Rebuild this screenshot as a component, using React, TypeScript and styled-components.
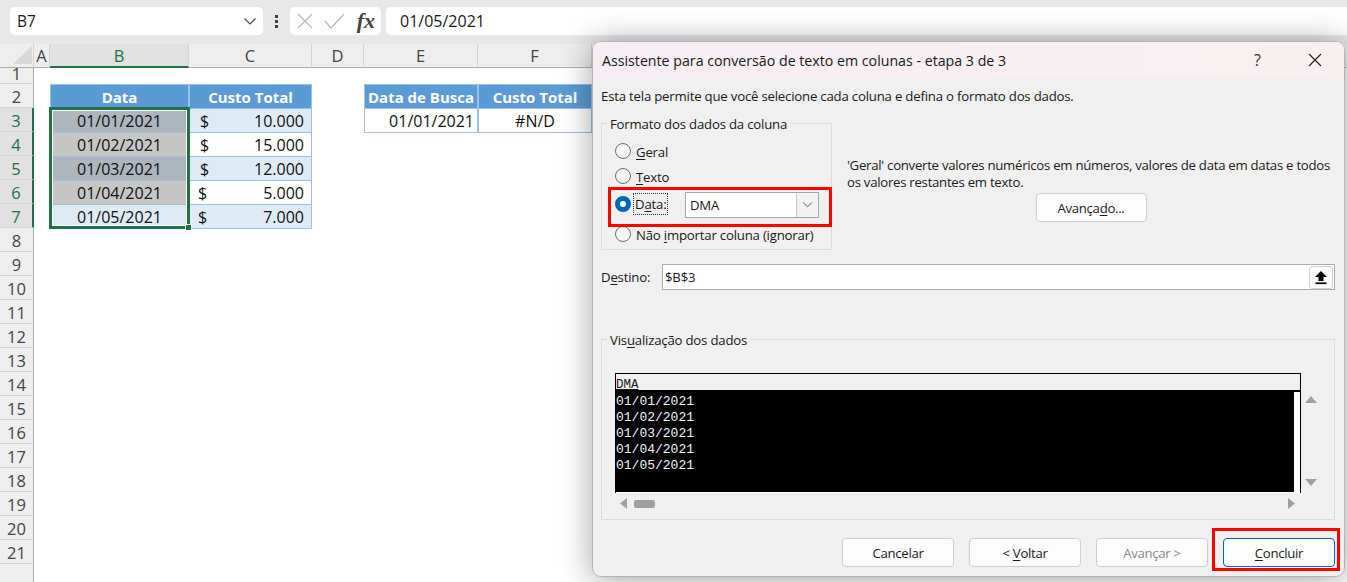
import React from "react";
import styled, { createGlobalStyle } from "styled-components";

const COLUMNS = ["A", "B", "C", "D", "E", "F", "", "", "", ""];
const ROW_COUNT = 22;
const LAST_LABEL = 21;
const FONT = `"Open Sans", "Noto Sans", sans-serif`;

const GlobalStyle = createGlobalStyle`
  html, body {
    margin: 0;
    padding: 0;
    width: 1347px;
    height: 582px;
    overflow: hidden;
    background: #ffffff;
    font-family: ${FONT};
    color: #1a1a1a;
  }
  u { text-underline-offset: 2px; text-decoration-thickness: 1px; }
`;

const Page = styled.div`
  position: relative;
  width: 1347px;
  height: 582px;
  overflow: hidden;
  display: flex;
  flex-direction: column;
`;

/* formula bar */
const FormulaBar = styled.div`
  height: 44px;
  flex: none;
  box-sizing: border-box;
  padding: 7px 0 9px 10px;
  display: flex;
  align-items: stretch;
  background: #e8e8e8;
`;

const NameBox = styled.div`
  width: 253px;
  box-sizing: border-box;
  padding: 0 6px 0 7px;
  display: flex;
  align-items: center;
  justify-content: space-between;
  background: #fff;
  border-radius: 5px;
  font-size: 15.5px;
`;

const Dots = styled.div`
  width: 27px;
  display: flex;
  flex-direction: column;
  align-items: center;
  justify-content: center;
  gap: 2px;
  span {
    width: 3px;
    height: 3px;
    background: #444;
  }
`;

const FormulaButtons = styled.div`
  width: 91px;
  box-sizing: border-box;
  padding: 0 6px 0 7px;
  display: flex;
  align-items: center;
  justify-content: space-between;
  background: #fff;
  border-radius: 5px;
`;

const Fx = styled.span`
  font-family: "Liberation Serif", serif;
  font-style: italic;
  font-weight: 700;
  font-size: 22px;
  line-height: 24px;
  color: #444;
`;

const FormulaInput = styled.div`
  flex: 1;
  margin-left: 5px;
  padding-left: 14px;
  display: flex;
  align-items: center;
  background: #fff;
  border-radius: 5px 0 0 5px;
  font-size: 16px;
`;

/* sheet */
const Sheet = styled.div`
  flex: 1;
  display: grid;
  grid-template-columns: 34px 16px 139px 123px 52px 114px 114px repeat(4, 190px);
  grid-template-rows: 24px 16px repeat(${ROW_COUNT - 1}, 24px);
  background: #fff;
  font-size: 16px;
`;

const Corner = styled.div`
  background: #eeeeee;
  border-bottom: 1px solid #b0b0b0;
  border-right: 1px solid #d4d4d4;
  box-sizing: border-box;
  display: flex;
  align-items: flex-end;
  justify-content: flex-end;
  padding: 0 1px 3px 0;
`;

const ColumnHeader = styled.div<{ $active?: boolean }>`
  box-sizing: border-box;
  display: flex;
  align-items: center;
  justify-content: center;
  font-size: 16.5px;
  color: ${(p) => (p.$active ? "#217346" : "#444")};
  background: ${(p) => (p.$active ? "#e1e1e1" : "#eeeeee")};
  border-right: 1px solid #d4d4d4;
  border-bottom: ${(p) => (p.$active ? "2px solid #217346" : "1px solid #b0b0b0")};
`;

const RowHeader = styled.div<{ $active?: boolean; $row: number }>`
  grid-column: 1;
  grid-row: ${(p) => p.$row + 1};
  box-sizing: border-box;
  padding: ${(p) => (p.$row === 1 ? "0 0 3px" : "2px 0 0")};
  display: flex;
  align-items: center;
  justify-content: center;
  overflow: hidden;
  font-size: 16.5px;
  line-height: ${(p) => (p.$row === 1 ? "12px" : "20px")};
  color: ${(p) => (p.$active ? "#217346" : "#444")};
  background: ${(p) => (p.$active ? "#e1e1e1" : "#eeeeee")};
  border-bottom: 1px solid #d4d4d4;
  border-right: ${(p) => (p.$active ? "2px solid #217346" : "1px solid #b0b0b0")};
`;

const Cell = styled.div<{
  $col: number;
  $row: number;
  $bg?: string;
  $head?: boolean;
  $align?: string;
  $pad?: number;
}>`
  grid-column: ${(p) => p.$col};
  grid-row: ${(p) => p.$row};
  box-sizing: border-box;
  display: flex;
  align-items: center;
  justify-content: ${(p) => p.$align ?? "center"};
  padding: 0 ${(p) => p.$pad ?? 3}px;
  background: ${(p) => p.$bg ?? "#fff"};
  border: 1px solid #9bc2e6;
  margin: 0 0 -1px 0;
  white-space: nowrap;
  color: ${(p) => (p.$head ? "#fff" : "#111")};
  font-weight: ${(p) => (p.$head ? 700 : 400)};
  font-size: ${(p) => (p.$head ? "15px" : "16px")};
`;

const Selection = styled.div`
  grid-column: 3;
  grid-row: 4 / 9;
  position: relative;
  margin: -1px;
  box-sizing: border-box;
  border: 3px solid #217346;
  box-shadow: inset 0 0 0 1px #fff;
`;

const FillHandle = styled.span`
  position: absolute;
  right: -5px;
  bottom: -5px;
  width: 5px;
  height: 5px;
  background: #217346;
  border: 1px solid #fff;
`;

/* dialog */
const Dialog = styled.div`
  position: absolute;
  left: 592px;
  top: 41px;
  width: 753px;
  height: 536px;
  box-sizing: border-box;
  display: flex;
  flex-direction: column;
  overflow: hidden;
  background: #f0f0f0;
  border: 1px solid #b4b4b4;
  border-radius: 9px;
  font-size: 13.2px;
  letter-spacing: -0.2px;
`;

const DialogShadow = styled.div`
  position: absolute;
  left: 592px;
  top: 41px;
  width: 753px;
  height: 536px;
  border-radius: 9px;
  box-shadow: 0 2px 32px rgba(0, 0, 0, 0.38);
`;

const TitleBar = styled.div`
  height: 36px;
  flex: none;
  padding: 0 22px 0 9px;
  display: flex;
  align-items: center;
  background: linear-gradient(90deg, #f6eef4, #f8f0f0);
  font-size: 14.2px;
  letter-spacing: 0;
`;

const TitleText = styled.span`
  flex: 1;
`;

const HelpMark = styled.span`
  width: 54px;
  font-size: 16px;
  color: #333;
`;

const Body = styled.div`
  flex: 1;
  padding: 0 9px 0 8px;
  display: flex;
  flex-direction: column;
`;

const Intro = styled.div`
  margin-top: 9px;
  height: 18px;
  line-height: 18px;
`;

const FormatRow = styled.div`
  margin-top: 18px;
  display: flex;
`;

const Group = styled.div<{ $width?: string; $height: number }>`
  position: relative;
  flex: none;
  box-sizing: border-box;
  width: ${(p) => p.$width ?? "100%"};
  height: ${(p) => p.$height}px;
  border: 1px solid #dcdcdc;
`;

const Legend = styled.span`
  position: absolute;
  left: 5px;
  top: -9px;
  padding: 0 3px;
  line-height: 18px;
  background: #f0f0f0;
`;

const RadioStack = styled.div`
  padding: 15px 0 0 13px;
`;

const RadioRow = styled.div<{ $height: number }>`
  height: ${(p) => p.$height}px;
  display: flex;
  align-items: center;
`;

const Radio = styled.span<{ $checked?: boolean }>`
  flex: none;
  width: 16px;
  height: 16px;
  box-sizing: border-box;
  margin-right: 5px;
  border-radius: 50%;
  background: ${(p) => (p.$checked ? "#fff" : "#f5f5f5")};
  border: ${(p) => (p.$checked ? "5px solid #0067c0" : "1px solid #6e6e6e")};
`;

const RadioText = styled.span`
  padding-top: 2px;
`;

const FocusLabel = styled.span`
  flex: none;
  box-sizing: border-box;
  margin-left: -2px;
  padding-left: 1px;
  width: 33px;
  height: 20px;
  line-height: 21px;
  outline: 1px dotted #333;
`;

const SelectBox = styled.div`
  margin: 1px 0 0 18px;
  width: 134px;
  height: 26px;
  box-sizing: border-box;
  padding-left: 4px;
  display: flex;
  align-items: center;
  justify-content: space-between;
  background: #fff;
  border: 1px solid #a8a8a8;
`;

const SelectArrow = styled.span`
  width: 21px;
  height: 24px;
  display: flex;
  align-items: center;
  justify-content: center;
  background: #f2f2f2;
  border-left: 1px solid #c8c8c8;
`;

const HintColumn = styled.div`
  flex: 1;
  min-width: 0;
  margin: 34px 0 0 15px;
  display: flex;
  flex-direction: column;
`;

const HintText = styled.div`
  line-height: 17px;
  white-space: nowrap;
  letter-spacing: -0.27px;
`;

const PushButton = styled.button<{ $primary?: boolean; $disabled?: boolean }>`
  flex: none;
  width: 112px;
  height: 29px;
  box-sizing: border-box;
  padding: 0;
  background: #fdfdfd;
  border: 1px solid ${(p) => (p.$primary ? "#0067c0" : "#d0d0d0")};
  border-radius: 4px;
  font: inherit;
  letter-spacing: -0.3px;
  color: ${(p) => (p.$disabled ? "#8a8a8a" : "#1a1a1a")};
`;

const AdvancedButton = styled(PushButton)`
  align-self: center;
  width: 111px;
  margin-top: 2px;
`;

const TargetRow = styled.div`
  margin-top: 14px;
  height: 26px;
  display: flex;
  align-items: center;
`;

const TargetLabel = styled.span`
  width: 61px;
`;

const TargetInput = styled.div`
  flex: 1;
  height: 26px;
  box-sizing: border-box;
  padding: 0 1px 0 2px;
  display: flex;
  align-items: center;
  justify-content: space-between;
  background: #fff;
  border: 1px solid #ababab;
`;

const CollapseButton = styled.span`
  width: 24px;
  height: 23px;
  box-sizing: border-box;
  display: flex;
  align-items: center;
  justify-content: center;
  background: #fbfbfb;
  border: 1px solid #d0d0d0;
  border-radius: 3px;
`;

const PreviewGroup = styled.div`
  margin-top: 49px;
`;

const PreviewInner = styled.div`
  padding: 33px 0 0 13px;
  display: flex;
`;

const PreviewTable = styled.div`
  width: 686px;
  height: 120px;
  box-sizing: border-box;
  border-top: 1px solid #000;
  border-left: 1px solid #000;
  border-right: 1px solid #000;
  display: flex;
  flex-direction: column;
  font-family: "Liberation Mono", monospace;
  font-size: 13px;
  letter-spacing: 0;
  background: #fff;
`;

const PreviewHead = styled.div`
  height: 16px;
  flex: none;
  line-height: 23px;
  font-size: 12.5px;
  background: #f0f0f0;
  border-bottom: 2px solid #000;
  text-decoration: underline;
  overflow: hidden;
`;

const PreviewRows = styled.div`
  flex: 1;
  margin: 0 6px 1px 0;
  padding-top: 2px;
  background: #000;
  color: #f0f4fa;
  line-height: 16px;
`;

const VScroll = styled.div`
  padding: 23px 0 0 4px;
  height: 90px;
  display: flex;
  flex-direction: column;
  justify-content: space-between;
`;

const HScroll = styled.div`
  margin: 5px 0 0 13px;
  width: 683px;
  padding: 0 3px 0 5px;
  box-sizing: border-box;
  display: flex;
  align-items: center;
`;

const Thumb = styled.span`
  width: 21px;
  height: 8px;
  margin-left: 7px;
  background: #a0a0a0;
  border-radius: 2px;
`;

const ScrollSpacer = styled.span`
  flex: 1;
`;

const Footer = styled.div`
  margin-top: 18px;
  display: flex;
  justify-content: flex-end;
  gap: 15px;
`;

const Highlight = styled.div<{ $left: number; $top: number; $width: number; $height: number }>`
  position: absolute;
  left: ${(p) => p.$left}px;
  top: ${(p) => p.$top}px;
  width: ${(p) => p.$width}px;
  height: ${(p) => p.$height}px;
  box-sizing: border-box;
  border: 3px solid #ff0000;
`;

const Chevron = ({ size = 14, color = "#444" }: { size?: number; color?: string }) => (
  <svg width={size} height={size} viewBox="0 0 14 14" fill="none">
    <path d="M1.5 4.5 7 10l5.5-5.5" stroke={color} strokeWidth="1.1" />
  </svg>
);

const CrossIcon = () => (
  <svg width="16" height="16" viewBox="0 0 16 16" fill="none">
    <path d="M1 1l14 14M15 1L1 15" stroke="#b8b8b8" strokeWidth="1.2" />
  </svg>
);

const CheckIcon = () => (
  <svg width="22" height="16" viewBox="0 0 22 16" fill="none">
    <path d="M1 8l6 7L20 1" stroke="#b8b8b8" strokeWidth="1.2" />
  </svg>
);

const CloseIcon = () => (
  <svg width="14" height="14" viewBox="0 0 14 14" fill="none">
    <path d="M1 1l12 12M13 1L1 13" stroke="#222" strokeWidth="1.1" />
  </svg>
);

const UploadIcon = () => (
  <svg width="14" height="15" viewBox="0 0 14 15" fill="#000">
    <path d="M7 1 13 7H9.5v4h-5V7H1z" />
    <rect x="1.5" y="12.4" width="11" height="1.7" />
  </svg>
);

const Triangle = ({ dir }: { dir: "up" | "down" | "left" | "right" }) => {
  const paths = {
    up: "M6 0 12 7H0z",
    down: "M0 0h12L6 7z",
    left: "M7 0v11L0 5.5z",
    right: "M0 0v11l7-5.5z",
  };
  const wide = dir === "up" || dir === "down";
  return (
    <svg width={wide ? 12 : 7} height={wide ? 7 : 11} viewBox={wide ? "0 0 12 7" : "0 0 7 11"} fill="#a0a0a0">
      <path d={paths[dir]} />
    </svg>
  );
};

const CornerMark = () => (
  <svg width="19" height="18" viewBox="0 0 19 18" fill="#d8d8d8">
    <path d="M19 0v18H0z" />
  </svg>
);

const dataRows = [
  { date: "01/01/2021", bg: "#adb5bf", costBg: "#ddebf7", cost: "10.000", pad: 10 },
  { date: "01/02/2021", bg: "#c6c6c6", costBg: "#ffffff", cost: "15.000", pad: 10 },
  { date: "01/03/2021", bg: "#adb5bf", costBg: "#ddebf7", cost: "12.000", pad: 10 },
  { date: "01/04/2021", bg: "#c6c6c6", costBg: "#ffffff", cost: "5.000", pad: 8 },
  { date: "01/05/2021", bg: "#ddebf7", costBg: "#ddebf7", cost: "7.000", pad: 8 },
];

const previewDates = ["01/01/2021", "01/02/2021", "01/03/2021", "01/04/2021", "01/05/2021"];

const Accounting = styled.span`
  flex: 1;
  display: flex;
  justify-content: space-between;
`;

const CostCell = styled(Cell)`
  padding-right: 7px;
`;

export default function App() {
  return (
    <Page>
      <GlobalStyle />
      <FormulaBar>
        <NameBox>
          B7
          <Chevron />
        </NameBox>
        <Dots>
          <span />
          <span />
          <span />
        </Dots>
        <FormulaButtons>
          <CrossIcon />
          <CheckIcon />
          <Fx>fx</Fx>
        </FormulaButtons>
        <FormulaInput>01/05/2021</FormulaInput>
      </FormulaBar>

      <Sheet>
        <Corner>
          <CornerMark />
        </Corner>
        {COLUMNS.map((c, i) => (
          <ColumnHeader key={i} $active={c === "B"}>
            {c}
          </ColumnHeader>
        ))}
        {Array.from({ length: ROW_COUNT }, (_, i) => (
          <RowHeader key={i} $row={i + 1} $active={i >= 2 && i <= 6}>
            {i < LAST_LABEL ? i + 1 : ""}
          </RowHeader>
        ))}

        <Cell $col={3} $row={3} $bg="#5b9bd5" $head>
          Data
        </Cell>
        <Cell $col={4} $row={3} $bg="#5b9bd5" $head>
          Custo Total
        </Cell>
        {dataRows.map((r, i) => (
          <React.Fragment key={r.date}>
            <Cell $col={3} $row={i + 4} $bg={r.bg}>
              {r.date}
            </Cell>
            <CostCell $col={4} $row={i + 4} $bg={r.costBg} $pad={r.pad}>
              <Accounting>
                <span>$</span>
                <span>{r.cost}</span>
              </Accounting>
            </CostCell>
          </React.Fragment>
        ))}
        <Selection>
          <FillHandle />
        </Selection>

        <Cell $col={6} $row={3} $bg="#5b9bd5" $head>
          Data de Busca
        </Cell>
        <Cell $col={7} $row={3} $bg="#5b9bd5" $head>
          Custo Total
        </Cell>
        <Cell $col={6} $row={4} $align="flex-end">
          01/01/2021
        </Cell>
        <Cell $col={7} $row={4}>
          #N/D
        </Cell>
      </Sheet>

      <DialogShadow />
      <Dialog>
        <TitleBar>
          <TitleText>Assistente para conversão de texto em colunas - etapa 3 de 3</TitleText>
          <HelpMark>?</HelpMark>
          <CloseIcon />
        </TitleBar>
        <Body>
          <Intro>Esta tela permite que você selecione cada coluna e defina o formato dos dados.</Intro>
          <FormatRow>
            <Group $width="231px" $height={127}>
              <Legend>Formato dos dados da coluna</Legend>
              <RadioStack>
                <RadioRow $height={24}>
                  <Radio />
                  <RadioText>
                    <u>G</u>eral
                  </RadioText>
                </RadioRow>
                <RadioRow $height={26}>
                  <Radio />
                  <RadioText>
                    <u>T</u>exto
                  </RadioText>
                </RadioRow>
                <RadioRow $height={30}>
                  <Radio $checked />
                  <FocusLabel>
                    D<u>a</u>ta:
                  </FocusLabel>
                  <SelectBox>
                    DMA
                    <SelectArrow>
                      <Chevron size={11} />
                    </SelectArrow>
                  </SelectBox>
                </RadioRow>
                <RadioRow $height={30}>
                  <Radio />
                  <RadioText>
                    Não <u>i</u>mportar coluna (ignorar)
                  </RadioText>
                </RadioRow>
              </RadioStack>
            </Group>
            <HintColumn>
              <HintText>
                'Geral' converte valores numéricos em números, valores de data em datas e todos
                <br />
                os valores restantes em texto.
              </HintText>
              <AdvancedButton>
                Avança<u>d</u>o...
              </AdvancedButton>
            </HintColumn>
          </FormatRow>

          <TargetRow>
            <TargetLabel>
              D<u>e</u>stino:
            </TargetLabel>
            <TargetInput>
              $B$3
              <CollapseButton>
                <UploadIcon />
              </CollapseButton>
            </TargetInput>
          </TargetRow>

          <PreviewGroup>
            <Group $height={181}>
              <Legend>
                Vis<u>u</u>alização dos dados
              </Legend>
              <PreviewInner>
                <PreviewTable>
                  <PreviewHead>DMA</PreviewHead>
                  <PreviewRows>
                    {previewDates.map((d) => (
                      <div key={d}>{d}</div>
                    ))}
                  </PreviewRows>
                </PreviewTable>
                <VScroll>
                  <Triangle dir="up" />
                  <Triangle dir="down" />
                </VScroll>
              </PreviewInner>
              <HScroll>
                <Triangle dir="left" />
                <Thumb />
                <ScrollSpacer />
                <Triangle dir="right" />
              </HScroll>
            </Group>
          </PreviewGroup>

          <Footer>
            <PushButton>Cancelar</PushButton>
            <PushButton>
              &lt; <u>V</u>oltar
            </PushButton>
            <PushButton $disabled>Avançar &gt;</PushButton>
            <PushButton $primary>
              <u>C</u>oncluir
            </PushButton>
          </Footer>
        </Body>
        <Highlight $left={15} $top={145} $width={224} $height={40} />
        <Highlight $left={619} $top={486} $width={128} $height={43} />
      </Dialog>
    </Page>
  );
}
